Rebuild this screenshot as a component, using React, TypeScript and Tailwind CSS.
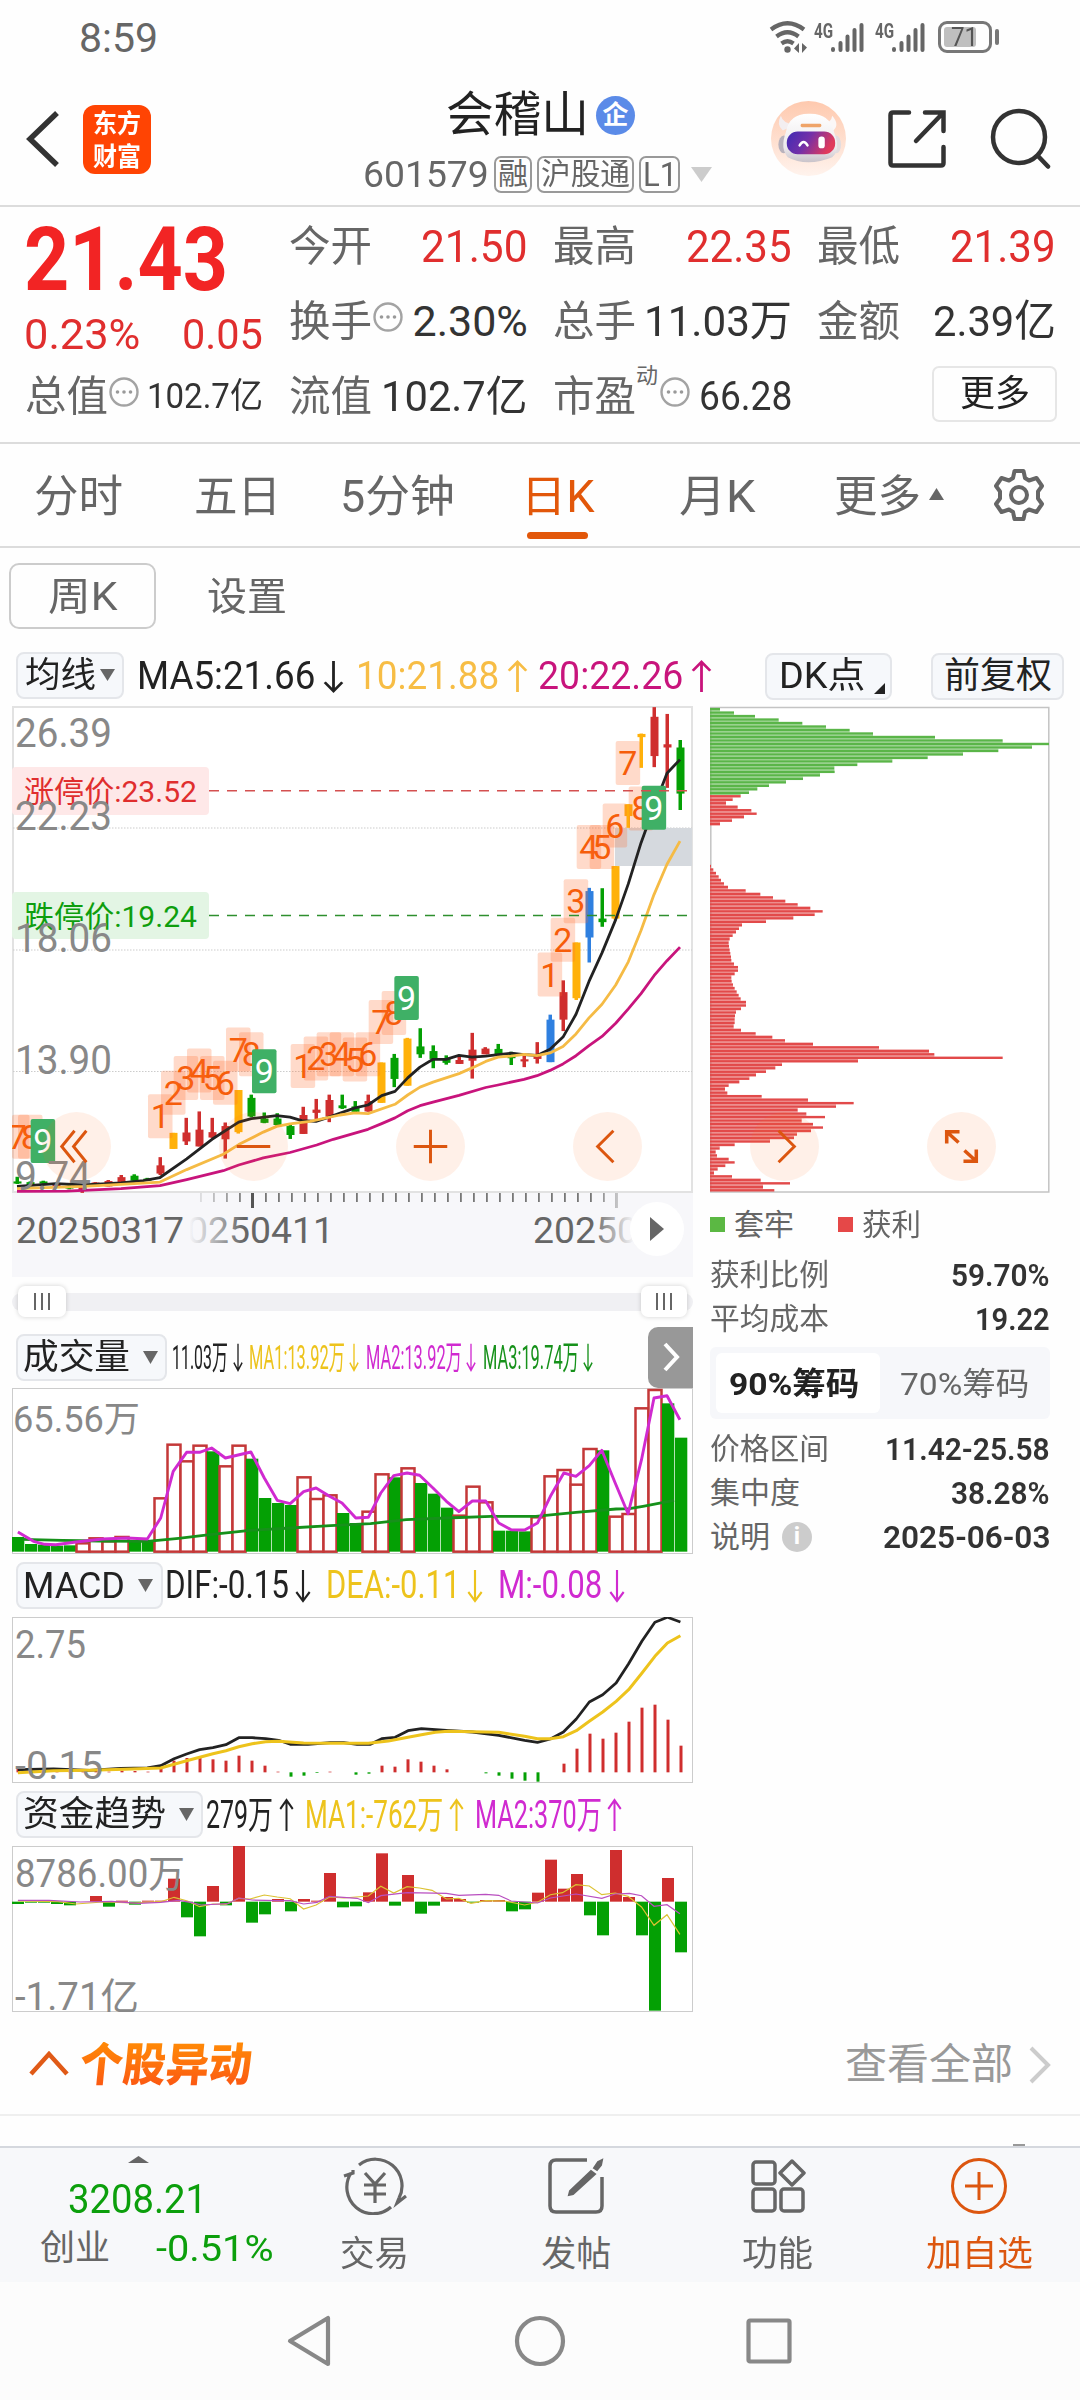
import { useLayoutEffect, useRef, useState } from 'react';
import type { ReactNode } from 'react';

const RED = '#cf2e2e';
const GREEN = '#04a004';
const YELLOW = '#ffb10a';
const BLUE = '#2f80e0';

type Point = [number, number];

// Squeezes or stretches a label to the width of its box
function Fit({ className = '', children }: { className?: string; children: ReactNode }) {
  const outer = useRef<HTMLSpanElement>(null);
  const inner = useRef<HTMLSpanElement>(null);
  const [scale, setScale] = useState(1);

  useLayoutEffect(() => {
    if (outer.current && inner.current) {
      setScale(outer.current.clientWidth / inner.current.offsetWidth);
    }
  }, []);

  return (
    <span ref={outer} className={`inline-block shrink-0 whitespace-nowrap leading-none ${className}`}>
      <span ref={inner} className="inline-block origin-left" style={{ transform: `scaleX(${scale})` }}>
        {children}
      </span>
    </span>
  );
}

function Arrow({ up = false, className = '' }: { up?: boolean; className?: string }) {
  return (
    <svg
      viewBox="0 0 18 34"
      fill="none"
      stroke="currentColor"
      strokeWidth="2.4"
      preserveAspectRatio="none"
      className={`shrink-0 ${up ? 'rotate-180' : ''} ${className}`}
    >
      <path d="M9 1V32M1.5 23L9 32L16.5 23" />
    </svg>
  );
}

function Triangle({ className = '' }: { className?: string }) {
  return (
    <svg viewBox="0 0 10 10" preserveAspectRatio="none" fill="currentColor" className={`shrink-0 ${className}`}>
      <path d="M0 0H10L5 10Z" />
    </svg>
  );
}

function Dots() {
  return (
    <svg viewBox="0 0 30 30" className="w-[30px] h-[30px] shrink-0 mb-[10px]" fill="none" stroke="#a3a3a3" strokeWidth="2.4">
      <circle cx="15" cy="15" r="13.5" />
      <g fill="#999" stroke="none">
        <circle cx="8.5" cy="15" r="1.8" />
        <circle cx="15" cy="15" r="1.8" />
        <circle cx="21.5" cy="15" r="1.8" />
      </g>
    </svg>
  );
}

function Signal() {
  return (
    <div className="flex items-start">
      <Fit className="w-[19px] text-[20px] font-bold">4G</Fit>
      <svg viewBox="0 0 36 32" className="w-[36px] h-[32px] -ml-[3px]" stroke="#666" strokeWidth="4" strokeLinecap="round">
        <path d="M3 28V29M10.5 22V29M17.500 15.500V29M24.500 9V29M31.500 4V29" />
      </svg>
    </div>
  );
}

function StatusBar() {
  return (
    <div className="h-[72px] flex items-center pl-[79px] pr-[81px] pb-1 text-[#666]">
      <Fit className="w-[79px] text-[41px] mt-[8px]">8:59</Fit>
      <div className="ml-auto flex items-center mt-[5px]">
        <svg viewBox="0 0 40 34" className="w-[40px] h-[34px]" fill="none" stroke="#666" strokeWidth="4.200">
          <path d="M2 9.500Q18.500 -3 35 9.500M7.500 16.500Q18.500 8 29.500 16.500M12.500 23.500Q18.500 19 24.500 23.500" />
          <circle cx="18.500" cy="29.500" r="3.200" fill="#666" stroke="none" />
          <path d="M30 23V33L25 28.500ZM33 33V23L38 27.500Z" fill="#666" stroke="none" />
        </svg>
        <div className="ml-[5px]"><Signal /></div>
        <div className="ml-[9px]"><Signal /></div>
        <div className="ml-[11px] w-[54px] h-[32px] border-[3px] border-[#777] rounded-[9px] p-[3px] flex relative">
          <div className="w-[32px] h-full bg-[#bfbfbf] rounded-[3px]" />
          <Fit className="absolute left-[10px] top-0 w-[27px] text-[26px] text-[#555]">71</Fit>
        </div>
        <div className="w-[4px] h-[16px] ml-[3px] bg-[#777] rounded-full" />
      </div>
    </div>
  );
}

function Robot() {
  return (
    <svg viewBox="0 0 76 76" className="w-[75px] h-[75px]">
      <defs>
        <linearGradient id="halo" x1="0" y1="0" x2="0" y2="1">
          <stop offset="0" stopColor="#fec9ae" />
          <stop offset="1" stopColor="#fff3ed" />
        </linearGradient>
        <linearGradient id="visor" x1="0" y1="0" x2="1" y2="0.3">
          <stop offset="0" stopColor="#3f2bb4" />
          <stop offset="0.5" stopColor="#7430a8" />
          <stop offset="1" stopColor="#e03a5c" />
        </linearGradient>
        <linearGradient id="shell" x1="0" y1="0" x2="0" y2="1">
          <stop offset="0" stopColor="#ffffff" />
          <stop offset="0.7" stopColor="#ece9ec" />
          <stop offset="1" stopColor="#c9c3ca" />
        </linearGradient>
      </defs>
      <circle cx="38" cy="38" r="38" fill="url(#halo)" />
      <path d="M10 15Q5 24 12 30L24 24Q12 23 10 15Z" fill="#f3eef0" />
      <path d="M62 15Q70 24 63 30L52 22Q61 23 62 15Z" fill="#fbf7f7" />
      <ellipse cx="13" cy="44" rx="5.500" ry="9" fill="#b9b2bc" />
      <ellipse cx="66" cy="44" rx="5" ry="9" fill="#e2dcdf" />
      <path d="M15 32Q18 13 38 13Q60 12 64 32Q71 50 62 57Q50 62 38 62Q26 62 17 57Q9 48 15 32Z" fill="url(#shell)" />
      <rect x="30" y="23" width="21" height="3.500" rx="1.500" fill="#efa469" />
      <rect x="16" y="31" width="49" height="23" rx="11" fill="url(#visor)" />
      <path d="M29 45Q33 38 37 45" fill="none" stroke="#fff" strokeWidth="2.500" strokeLinecap="round" />
      <rect x="48" y="36" width="6.500" height="12" rx="3" fill="#fff" />
    </svg>
  );
}

function Header() {
  return (
    <header className="h-[135px] flex border-b-2 border-[#dcdcdc] relative">
      <svg viewBox="0 0 34 56" className="w-[34px] h-[56px] ml-[26px] mt-[39px]" fill="none" stroke="#333" strokeWidth="5.500">
        <path d="M31 2L4 28L31 54" />
      </svg>
      <div className="w-[68px] h-[69px] ml-[22.500px] mt-[33px] rounded-[12px] bg-[#ff4403] text-white font-bold text-[26px] leading-[30px] text-center pt-[4px]">
        <Fit className="w-[48px]">东方</Fit>
        <Fit className="w-[48px] mt-[5px]">财富</Fit>
      </div>

      <div className="absolute left-[363px] top-[16px]">
        <div className="flex items-center h-[54px] pl-[83px]">
          <Fit className="w-[143px] text-[48px] text-[#222]">会稽山</Fit>
          <span className="ml-[7px] w-[39px] h-[39px] rounded-full bg-[#5b8be8] text-white font-bold text-[26px] leading-[38px] text-center">企</span>
        </div>
        <div className="flex items-center h-[38px] mt-[13px] text-[#666]">
          <Fit className="w-[126px] text-[37px]">601579</Fit>
          <span className="ml-[5px] w-[38px] h-[37px] border-2 border-[#999] rounded-[7px] flex items-center justify-center">
            <Fit className="w-[30px] text-[30px]">融</Fit>
          </span>
          <span className="ml-[5px] w-[97px] h-[37px] border-2 border-[#999] rounded-[7px] flex items-center justify-center">
            <Fit className="w-[89px] text-[30px]">沪股通</Fit>
          </span>
          <span className="ml-[5px] w-[41px] h-[37px] border-2 border-[#999] rounded-[7px] flex items-center justify-center">
            <Fit className="w-[34px] text-[33px]">L1</Fit>
          </span>
          <Triangle className="w-[21px] h-[15px] ml-[11px] text-[#ccc]" />
        </div>
      </div>

      <div className="ml-auto flex items-center pr-[29px] pb-[1px]">
        <Robot />
        <svg viewBox="0 0 60 60" className="w-[60px] h-[60px] ml-[41px] mt-[2px]" fill="none" stroke="#333" strokeWidth="4.500" strokeLinecap="round">
          <path d="M22 3.500H6Q3.500 3.500 3.500 6V54Q3.500 56.500 6 56.500H54Q56.500 56.500 56.500 54V38" />
          <path d="M38 3.500H56.500V22M55 5L29 32" />
        </svg>
        <svg viewBox="0 0 62 62" className="w-[62px] h-[62px] ml-[42px] mt-[1px]" fill="none" stroke="#333" strokeWidth="4.500" strokeLinecap="round">
          <circle cx="30" cy="29" r="26" />
          <path d="M49 48L59 58.500" />
        </svg>
      </div>
    </header>
  );
}

function Quote() {
  const label = 'w-[83px] -ml-[1.5px] text-[42px] text-[#666]';
  return (
    <section className="h-[237px] border-b-2 border-[#dcdcdc] pt-[2px] pl-[26px] pr-[24px] grid grid-cols-4 gap-x-[27px]">
      <div>
        <div className="h-[100px] flex items-center">
          <Fit className="w-[204px] -ml-[2px] text-[89px] font-bold text-[#f22424]">21.43</Fit>
        </div>
        <div className="h-[50px] flex items-center justify-between text-[43px] text-[#e02e2e]">
          <Fit className="w-[116px] -ml-[2px]">0.23%</Fit>
          <Fit className="w-[81px]">0.05</Fit>
        </div>
        <div className="h-[75px] flex items-center">
          <Fit className={label}>总值</Fit>
          <span className="ml-[1px]"><Dots /></span>
          <Fit className="w-[116px] ml-auto text-[35px] text-[#333]">102.7亿</Fit>
        </div>
      </div>

      <div>
        <div className="h-[75px] flex items-center justify-between">
          <Fit className={label}>今开</Fit>
          <Fit className="w-[107px] text-[44px] text-[#e02e2e]">21.50</Fit>
        </div>
        <div className="h-[75px] flex items-center">
          <Fit className={label}>换手</Fit>
          <span className="ml-[1px]"><Dots /></span>
          <Fit className="w-[115px] ml-auto text-[43px] text-[#333]">2.30%</Fit>
        </div>
        <div className="h-[75px] flex items-center justify-between">
          <Fit className={label}>流值</Fit>
          <Fit className="w-[147px] text-[42px] text-[#333]">102.7亿</Fit>
        </div>
      </div>

      <div>
        <div className="h-[75px] flex items-center justify-between">
          <Fit className={label}>最高</Fit>
          <Fit className="w-[106px] text-[44px] text-[#e02e2e]">22.35</Fit>
        </div>
        <div className="h-[75px] flex items-center justify-between">
          <Fit className={label}>总手</Fit>
          <Fit className="w-[148px] text-[43px] text-[#333]">11.03万</Fit>
        </div>
        <div className="h-[75px] flex items-center">
          <Fit className={label}>市盈</Fit>
          <Fit className="w-[22px] mb-[42px] text-[22px] text-[#666]">动</Fit>
          <span className="ml-[2px]"><Dots /></span>
          <Fit className="w-[93px] ml-auto text-[40px] text-[#333]">66.28</Fit>
        </div>
      </div>

      <div>
        <div className="h-[75px] flex items-center justify-between">
          <Fit className={label}>最低</Fit>
          <Fit className="w-[106px] text-[44px] text-[#e02e2e]">21.39</Fit>
        </div>
        <div className="h-[75px] flex items-center justify-between">
          <Fit className={label}>金额</Fit>
          <Fit className="w-[123px] text-[43px] text-[#333]">2.39亿</Fit>
        </div>
        <div className="h-[71px] flex items-center justify-end">
          <button className="w-[125px] h-[56px] -mr-[1px] mb-[2px] border-2 border-[#e6e6e6] rounded-[7px] flex items-center justify-center">
            <Fit className="w-[70px] text-[36px] text-[#222]">更多</Fit>
          </button>
        </div>
      </div>
    </section>
  );
}

function Tabs() {
  return (
    <nav className="h-[104px] border-b-2 border-[#dcdcdc] flex items-center pt-[3px] pl-[34px] text-[44px] text-[#666] relative">
      <Fit className="w-[89px]">分时</Fit>
      <Fit className="w-[87px] ml-[71px]">五日</Fit>
      <Fit className="w-[115px] ml-[59px]">5分钟</Fit>
      <Fit className="w-[74px] ml-[66px] text-[#e2570a]">日K</Fit>
      <Fit className="w-[77px] ml-[84px]">月K</Fit>
      <Fit className="w-[87px] ml-[78px]">更多</Fit>
      <Triangle className="w-[15px] h-[12px] ml-[8px] mb-[5px] rotate-180" />
      <svg viewBox="0 0 54 54" className="w-[54px] h-[54px] ml-[48px] mb-[4px]" fill="none" stroke="#666" strokeWidth="4" strokeLinejoin="round">
        <path d="M22.500 3H31.500L33 10L37 12.500L44.500 10L50 18L46 23.500V30.500L50 36L44.500 44L37 41.500L33 44L31.500 51H22.500L21 44L17 41.500L9.500 44L4 36L8 30.500V23.500L4 18L9.500 10L17 12.500L21 10Z" />
        <circle cx="27" cy="27" r="8" />
      </svg>
      <div className="absolute left-[527px] bottom-[7px] w-[61px] h-[7px] rounded-full bg-[#e2570a]" />
    </nav>
  );
}

function SubTabs() {
  return (
    <div className="h-[98px] pt-[15px] pl-[9px] flex text-[39px] text-[#666]">
      <div className="w-[147px] h-[66px] border-2 border-[#ccc] rounded-[10px] flex items-center justify-center pt-[3px]">
        <Fit className="w-[69px]">周K</Fit>
      </div>
      <div className="h-[66px] ml-[51px] flex items-center pt-[3px]">
        <Fit className="w-[80px]">设置</Fit>
      </div>
    </div>
  );
}

const chip = 'h-[47px] shrink-0 rounded-[8px] border-2 border-[#e4e6ea] bg-[#f6f8fb] flex items-center text-[#222]';

function AverageRow() {
  return (
    <div className="h-[60px] flex items-center pl-[16px] pr-[16px]">
      <div className={`${chip} w-[108px] pl-[7px] -mt-[2px]`}>
        <Fit className="w-[71px] text-[35px]">均线</Fit>
        <Triangle className="w-[15px] h-[12px] ml-[4px] text-[#666]" />
      </div>
      <div className="flex items-center ml-[13px] text-[38px] text-[#222]">
        <Fit className="w-[178px]">MA5:21.66</Fit>
        <Arrow className="w-[21px] h-[33px] ml-[8px]" />
      </div>
      <div className="flex items-center ml-[12px] text-[38px] text-[#f7bd45]">
        <Fit className="w-[143px]">10:21.88</Fit>
        <Arrow up className="w-[21px] h-[33px] ml-[8px]" />
      </div>
      <div className="flex items-center ml-[10px] text-[38px] text-[#c8147c]">
        <Fit className="w-[145px]">20:22.26</Fit>
        <Arrow up className="w-[21px] h-[33px] ml-[8px]" />
      </div>
      <div className={`${chip} w-[127px] ml-auto pl-[12px] relative`}>
        <Fit className="w-[86px] text-[36px]">DK点</Fit>
        <svg viewBox="0 0 11 11" className="absolute right-[5px] bottom-[4px] w-[11px] h-[11px]">
          <path d="M11 0V11H0Z" fill="#222" />
        </svg>
      </div>
      <div className={`${chip} w-[133px] ml-[39px] pl-[11px]`}>
        <Fit className="w-[108px] text-[36px]">前复权</Fit>
      </div>
    </div>
  );
}

// One column every 13px, shared by all the panels
const cx = (i: number) => 5 + 13 * i;

// [color, high, low, body top, body bottom]
const candles: [string, number, number, number, number][] = [
  [GREEN, 1335, 1355, 1348, 1354], [GREEN, 1348, 1360, 1350, 1358], [GREEN, 1346, 1354, 1348, 1354],
  [RED, 1354, 1362, 1356, 1362], [GREEN, 1358, 1370, 1360, 1368], [RED, 1358, 1380, 1360, 1372],
  [RED, 1350, 1362, 1351, 1362], [RED, 1344, 1362, 1347, 1362], [RED, 1330, 1354, 1336, 1352],
  [GREEN, 1328, 1350, 1332, 1346], [GREEN, 1338, 1346, 1340, 1346], [RED, 1280, 1330, 1303, 1326],
  [YELLOW, 1212, 1257, 1212, 1257], [RED, 1170, 1246, 1211, 1236], [RED, 1152, 1250, 1203, 1250],
  [RED, 1170, 1226, 1210, 1225], [RED, 1183, 1284, 1193, 1230], [YELLOW, 1092, 1214, 1092, 1210],
  [GREEN, 1105, 1168, 1114, 1166], [GREEN, 1155, 1185, 1172, 1184], [GREEN, 1157, 1194, 1172, 1190],
  [GREEN, 1190, 1229, 1193, 1218], [RED, 1139, 1215, 1162, 1215], [RED, 1117, 1173, 1147, 1156],
  [RED, 1105, 1182, 1120, 1165], [GREEN, 1105, 1145, 1135, 1143], [GREEN, 1123, 1155, 1138, 1153],
  [RED, 1105, 1153, 1123, 1152], [YELLOW, 1015, 1128, 1015, 1128], [GREEN, 991, 1084, 1002, 1061],
  [YELLOW, 946, 1080, 948, 1080], [GREEN, 919, 1002, 970, 992], [GREEN, 967, 1031, 983, 1005],
  [GREEN, 995, 1021, 1004, 1016], [RED, 998, 1019, 1008, 1019], [RED, 932, 1060, 979, 1010],
  [RED, 972, 992, 976, 992], [GREEN, 963, 995, 977, 995], [GREEN, 985, 1022, 988, 1003],
  [RED, 990, 1028, 1006, 1012], [RED, 958, 1018, 996, 1005], [BLUE, 881, 1014, 895, 1014],
  [RED, 785, 927, 818, 895], [YELLOW, 679, 840, 679, 835], [BLUE, 526, 735, 535, 665],
  [GREEN, 527, 635, 612, 622], [YELLOW, 465, 615, 465, 612], [YELLOW, 292, 358, 292, 325],
  [YELLOW, 94, 190, 95, 104], [RED, 20, 188, 47, 157], [RED, 39, 246, 124, 133], [GREEN, 112, 308, 133, 262],
];

const ma5: Point[] = [
  [51, 1362], [168, 1354], [250, 1358], [363, 1352], [430, 1346], [480, 1337], [560, 1285], [636, 1230], [716, 1182],
  [754, 1172], [830, 1164], [870, 1168], [905, 1178], [948, 1180], [987, 1168], [1065, 1142], [1104, 1134], [1145, 1108],
  [1185, 1096], [1223, 1058], [1260, 1028], [1299, 1006], [1338, 1006], [1377, 995], [1416, 1000], [1457, 997],
  [1494, 993], [1533, 989], [1572, 993], [1611, 995], [1650, 978], [1689, 944], [1728, 880], [1767, 788], [1806, 708],
  [1847, 615], [1885, 515], [1923, 400], [1962, 300], [2001, 205], [2040, 167],
];
const ma10: Point[] = [
  [51, 1368], [250, 1362], [363, 1356], [480, 1350], [560, 1315], [670, 1272], [716, 1245], [790, 1210], [830, 1194],
  [870, 1187], [930, 1180], [1020, 1162], [1065, 1156], [1104, 1158], [1185, 1132], [1223, 1106], [1260, 1084],
  [1299, 1070], [1377, 1046], [1416, 1030], [1457, 1012], [1494, 1000], [1533, 997], [1572, 992], [1611, 996],
  [1650, 988], [1689, 970], [1728, 935], [1767, 890], [1806, 852], [1847, 798], [1885, 733], [1923, 645], [1962, 545],
  [2001, 460], [2040, 395],
];
const ma20: Point[] = [
  [51, 1376], [200, 1375], [363, 1368], [480, 1360], [560, 1343], [670, 1318], [716, 1302], [790, 1282], [870, 1267],
  [950, 1246], [1000, 1230], [1104, 1202], [1145, 1186], [1185, 1170], [1223, 1150], [1260, 1136], [1299, 1126],
  [1377, 1107], [1457, 1085], [1494, 1078], [1572, 1062], [1611, 1052], [1650, 1037], [1689, 1019], [1728, 996],
  [1767, 968], [1806, 942], [1847, 905], [1885, 865], [1923, 822], [1962, 772], [2001, 730], [2040, 692],
];

// TD sequence marks
const marks: [number, number, number][] = [
  [15, 1161, 7], [54, 1161, 8], [92, 1173, 9],
  [444, 1104, 1], [483, 1038, 2], [521, 997, 3], [561, 976, 4], [600, 997, 5], [639, 1010, 6], [678, 917, 7], [717, 930, 8], [756, 978, 9],
  [872, 963, 1], [911, 942, 2], [950, 930, 3], [989, 930, 4], [1028, 945, 5], [1067, 930, 6], [1106, 840, 7], [1145, 815, 8], [1183, 773, 9],
  [1613, 707, 1], [1652, 610, 2], [1691, 502, 3], [1730, 350, 4], [1769, 350, 5], [1808, 290, 6], [1847, 115, 7], [1886, 242, 8],
];
const lastMark: [number, number, number] = [1925, 240, 9];

const kx = (v: number) => v / 3 - 12;
const ky = (v: number) => v / 2.8 - 6;
const trace = (points: Point[], fx: (v: number) => number, fy: (v: number) => number) =>
  points.map(([x, y]) => `${fx(x).toFixed(1)},${fy(y).toFixed(1)}`).join(' ');

function Mark({ mark: [x, y, n] }: { mark: [number, number, number] }) {
  const done = n === 9;
  const left = Math.max(kx(x), 0);
  return (
    <g fontSize="34" textAnchor="middle">
      <rect x={left} y={ky(y)} width={kx(x) + 24.5 - left} height="44" rx="2" fill={done ? '#3fb066' : '#ff6a2b'} fillOpacity={done ? 1 : 0.25} />
      <text x={kx(x) + 12.2} y={ky(y) + 34} fill={done ? '#fff' : '#f65d0a'}>{n}</text>
    </g>
  );
}

function CandleChart() {
  return (
    <svg viewBox="0 0 681 487" className="block w-[681px] h-[487px]">
      <rect x="1" y="1" width="679" height="485" fill="#fff" stroke="#e2e2e2" strokeWidth="2" />
      <g stroke="#ccc" strokeWidth="1.2" strokeDasharray="1.5 1.5">
        <path d="M1 122H680M1 244H680M1 365.500H680" />
      </g>
      <rect x="603" y="122" width="77" height="38" fill="#d5d9de" />

      <rect x="0" y="61" width="197" height="48" rx="4" fill="#fee8e8" />
      <rect x="0" y="186" width="197" height="47" rx="4" fill="#e3f5e4" />
      <g fontSize="30">
        <text x="12" y="95.500" fill="#e02e2e" textLength="173" lengthAdjust="spacingAndGlyphs">涨停价:23.52</text>
        <text x="12" y="220.500" fill="#0e9e0e" textLength="173" lengthAdjust="spacingAndGlyphs">跌停价:19.24</text>
      </g>

      {candles.map(([color, high, low, top, bottom], i) => (
        <g key={i} fill={color}>
          <rect x={cx(i) - 1.5} y={ky(high)} width="3.500" height={(low - high) / 2.8} />
          <rect x={cx(i) - 3.5} y={ky(top)} width="8" height={(bottom - top) / 2.8} />
        </g>
      ))}

      {marks.map((mark, i) => <Mark key={i} mark={mark} />)}

      <g fill="none" strokeWidth="2.800" strokeLinejoin="round">
        <polyline points={trace(ma20, kx, ky)} stroke="#c8147c" />
        <polyline points={trace(ma5, kx, ky)} stroke="#222" />
        <polyline points={trace(ma10, kx, ky)} stroke="#f5bb45" />
      </g>

      <g fontSize="40.500" fill="#888">
        <text x="3" y="40.500" textLength="97" lengthAdjust="spacingAndGlyphs">26.39</text>
        <text x="3" y="124" textLength="97" lengthAdjust="spacingAndGlyphs">22.23</text>
        <text x="3" y="246" textLength="97" lengthAdjust="spacingAndGlyphs">18.06</text>
        <text x="3" y="367.500" textLength="97" lengthAdjust="spacingAndGlyphs">13.90</text>
        <text x="3" y="484" textLength="76" lengthAdjust="spacingAndGlyphs">9.74</text>
      </g>

      {/* sits over the averages */}
      <Mark mark={lastMark} />

      <path d="M197 84.700H675" stroke="#d45050" strokeWidth="1.500" strokeDasharray="10 8" />
      <path d="M197 209.400H675" stroke="#2e8f2e" strokeWidth="1.500" strokeDasharray="10 8" />
    </svg>
  );
}

function TimeAxis() {
  const ticks = Array.from({ length: 33 }, (_, i) => 175 + 13 * i);
  return (
    <div className="w-[681px] h-[84px] bg-[#f7f7fa]">
      <svg viewBox="0 0 681 84" className="block w-[681px] h-[84px]">
        <defs>
          <linearGradient id="fadeL">
            <stop offset="0" stopColor="#f7f7fa" />
            <stop offset="1" stopColor="#f7f7fa" stopOpacity="0" />
          </linearGradient>
          <linearGradient id="fadeR">
            <stop offset="0" stopColor="#f7f7fa" stopOpacity="0" />
            <stop offset="1" stopColor="#f7f7fa" />
          </linearGradient>
        </defs>
        {ticks.map((x) => (
          <rect key={x} x={x} y="0" width="1.800" height="9" fill="#777" />
        ))}
        <rect x="239" y="0" width="3" height="15" fill="#555" />
        <rect x="603" y="0" width="3" height="15" fill="#777" />
        <g fontSize="37" fill="#666">
          <text x="154" y="49.500" textLength="168" lengthAdjust="spacingAndGlyphs">20250411</text>
          <text x="521" y="49.500" textLength="168" lengthAdjust="spacingAndGlyphs">20250603</text>
          <rect x="0" y="0" width="178" height="84" fill="#f7f7fa" />
          <rect x="177" y="0" width="55" height="84" fill="url(#fadeL)" />
          <rect x="580" y="0" width="42" height="84" fill="url(#fadeR)" />
          <rect x="621" y="0" width="60" height="84" fill="#f7f7fa" />
          <text x="4" y="49.500" textLength="168" lengthAdjust="spacingAndGlyphs">20250317</text>
        </g>
        <circle cx="645" cy="36" r="27" fill="#fff" />
        <path d="M638 24V48L652 36Z" fill="#666" />
      </svg>
    </div>
  );
}

function Handle({ className = '' }: { className?: string }) {
  return (
    <div className={`h-[31px] rounded-[7px] bg-white shadow-[0_0_5px_rgba(0,0,0,0.18)] flex items-center justify-center gap-[5px] ${className}`}>
      <i className="w-[2px] h-[17px] bg-[#666]" />
      <i className="w-[2px] h-[17px] bg-[#666]" />
      <i className="w-[2px] h-[17px] bg-[#666]" />
    </div>
  );
}

function RangeSlider() {
  return (
    <div className="h-[49px] flex items-center">
      <div className="w-[681px] h-[18px] rounded-full bg-[#f0f0f3] flex items-center justify-between pl-[6px] pr-[6px]">
        <Handle className="w-[48px]" />
        <Handle className="w-[46px]" />
      </div>
    </div>
  );
}

// [top, 1 = rise / 0 = fall]
const volumes: [number, number][] = [
  [1072, 0], [1093, 0], [1095, 0], [1098, 0], [1097, 0], [1088, 1], [1073, 1], [1082, 1], [1069, 1], [1083, 0], [1083, 0],
  [953, 1], [792, 1], [842, 1], [795, 1], [815, 0], [857, 1], [795, 1], [837, 0], [955, 0], [970, 0], [976, 0], [890, 1],
  [955, 1], [944, 1], [1000, 0], [1030, 0], [993, 1], [881, 1], [893, 0], [863, 1], [910, 0], [942, 0], [984, 0],
  [1005, 1], [918, 1], [965, 1], [1053, 0], [1053, 0], [1055, 0], [1010, 1], [887, 1], [868, 1], [912, 1], [805, 1],
  [812, 0], [1008, 1], [1000, 1], [683, 1], [628, 1], [671, 0], [774, 0],
];
const volumeMa: Point[] = [
  [40, 1057], [75, 1085], [100, 1094], [125, 1095], [170, 1087], [230, 1078], [285, 1075], [330, 1078], [360, 1015],
  [388, 875], [418, 818], [447, 818], [474, 805], [505, 835], [562, 817], [592, 895], [621, 962], [650, 972], [680, 936],
  [708, 925], [738, 950], [766, 970], [797, 1015], [825, 1013], [853, 940], [882, 888], [912, 880], [940, 887],
  [970, 925], [1000, 965], [1028, 996], [1058, 964], [1088, 964], [1117, 1030], [1145, 1050], [1175, 1051],
  [1204, 1030], [1233, 950], [1263, 880], [1290, 890], [1320, 858], [1348, 812], [1378, 910], [1407, 1002],
  [1437, 840], [1465, 655], [1494, 648], [1523, 720],
];
const volumeLongMa: Point[] = [
  [50, 1079], [140, 1082], [220, 1084], [330, 1085], [400, 1076], [470, 1065], [560, 1052], [650, 1045], [740, 1038],
  [830, 1032], [910, 1020], [1000, 1015], [1100, 1010], [1200, 1010], [1290, 998], [1380, 988], [1410, 987],
  [1440, 980], [1510, 962],
];

const sx = (v: number) => v / 2.24 - 12;

function VolumeChart() {
  const vy = (v: number) => (v - 625) / 3;
  return (
    <svg viewBox="0 0 681 166" className="block w-[681px] h-[166px]">
      <rect x="0.500" y="0.500" width="680" height="165" fill="#fff" stroke="#ccc" />
      {volumes.map(([top, rise], i) =>
        rise ? (
          <rect key={i} x={cx(i) - 5.5} y={vy(top) + 1} width="13" height={vy(1116) - vy(top) - 1} fill="#fff" stroke="#c43838" strokeWidth="2.500" />
        ) : (
          <rect key={i} x={cx(i) - 5} y={vy(top)} width="12.300" height={vy(1116) - vy(top)} fill={GREEN} />
        ),
      )}
      <text x="1" y="44" fontSize="36" fill="#888" textLength="127" lengthAdjust="spacingAndGlyphs">65.56万</text>
      <polyline points={trace(volumeLongMa, sx, vy)} fill="none" stroke="#16911a" strokeWidth="2.800" />
      <polyline points={trace(volumeMa, sx, vy)} fill="none" stroke="#d02ad0" strokeWidth="2.900" strokeLinejoin="round" />
    </svg>
  );
}

const macdBars = [
  687, 689, 690, 694, 690, 691, 693, 696, 693, 694, 696, 687, 663, 655, 652, 659, 663, 648, 663, 678, 696, 711, 708, 700,
  696, 698, 705, 702, 678, 681, 659, 666, 678, 689, 698, 698, 701, 708, 717, 723, 726, 698, 672, 627, 582, 597, 579, 546,
  504, 495, 540, 618,
];
const dif: Point[] = [
  [40, 690], [120, 688], [200, 692], [270, 686], [330, 685], [360, 678], [390, 657], [418, 643], [447, 630], [477, 624],
  [506, 615], [535, 594], [565, 594], [595, 597], [624, 602], [650, 614], [690, 614], [740, 609], [770, 609], [800, 614],
  [830, 614], [855, 597], [885, 593], [914, 573], [944, 567], [1000, 572], [1058, 577], [1117, 587], [1175, 602],
  [1204, 608], [1233, 598], [1262, 577], [1291, 538], [1320, 487], [1350, 465], [1380, 430], [1408, 372], [1438, 304],
  [1467, 248], [1495, 233], [1524, 247],
];
const dea: Point[] = [
  [40, 699], [120, 693], [200, 692], [280, 689], [360, 685], [418, 663], [477, 642], [506, 633], [535, 621], [565, 612],
  [595, 606], [624, 605], [680, 610], [740, 611], [825, 611], [870, 604], [914, 593], [944, 585], [975, 578],
  [1004, 575], [1088, 577], [1117, 578], [1175, 590], [1204, 597], [1233, 597], [1262, 591], [1291, 573], [1320, 545],
  [1350, 517], [1380, 485], [1408, 450], [1438, 400], [1467, 350], [1495, 310], [1524, 288],
];

function MacdChart() {
  const my = (v: number) => (v - 232) / 3;
  return (
    <svg viewBox="0 0 681 166" className="block w-[681px] h-[166px]">
      <rect x="0.500" y="0.500" width="680" height="165" fill="#fff" stroke="#ccc" />
      {macdBars.map((v, i) => (
        <rect key={i} x={cx(i) - 0.5} y={my(Math.min(v, 698))} width="3" height={Math.abs(v - 698) / 3} fill={v > 698 ? GREEN : RED} />
      ))}
      <polyline points={trace(dif, sx, my)} fill="none" stroke="#222" strokeWidth="2.800" strokeLinejoin="round" />
      <polyline points={trace(dea, sx, my)} fill="none" stroke="#edc31c" strokeWidth="3" strokeLinejoin="round" />
      <g fontSize="38" fill="#888">
        <text x="3" y="40.500" textLength="71" lengthAdjust="spacingAndGlyphs">2.75</text>
        <text x="3" y="161.500" textLength="88" lengthAdjust="spacingAndGlyphs">-0.15</text>
      </g>
    </svg>
  );
}

const fundBars = [
  373, 369, 369, 373, 377, 366, 349, 381, 363, 375, 363, 363, 297, 413, 470, 319, 377, 199, 429, 404, 358, 395, 358, 363,
  280, 383, 380, 338, 221, 378, 286, 402, 378, 352, 358, 369, 361, 361, 395, 389, 339, 240, 327, 283, 407, 467, 211, 352,
  467, 693, 295, 518,
];
const fundMa1: Point[] = [
  [40, 364], [130, 366], [170, 373], [230, 367], [300, 370], [360, 366], [390, 353], [420, 364], [447, 381], [477, 373],
  [506, 374], [535, 356], [560, 358], [592, 346], [621, 352], [650, 357], [680, 388], [708, 376], [738, 352], [770, 355],
  [825, 349], [853, 320], [882, 340], [912, 321], [940, 325], [968, 332], [1000, 358], [1028, 356], [1055, 371],
  [1088, 363], [1130, 364], [1175, 376], [1204, 368], [1233, 345], [1260, 339], [1290, 315], [1320, 319], [1348, 345],
  [1378, 340], [1407, 350], [1437, 382], [1465, 437], [1494, 405], [1523, 464],
];
const fundMa2: Point[] = [
  [40, 362], [110, 362], [180, 367], [250, 365], [310, 371], [360, 368], [400, 362], [430, 369], [450, 376], [510, 372],
  [535, 355], [565, 361], [620, 363], [650, 363], [680, 373], [710, 368], [738, 350], [800, 356], [825, 369], [853, 348],
  [912, 339], [1000, 341], [1028, 347], [1088, 344], [1117, 347], [1145, 364], [1204, 370], [1233, 355], [1290, 343],
  [1348, 356], [1378, 343], [1410, 341], [1437, 348], [1465, 380], [1494, 375], [1523, 402],
];

function FundChart() {
  const fy = (v: number) => (v - 199) / 3;
  return (
    <svg viewBox="0 0 681 166" className="block w-[681px] h-[166px]">
      <rect x="0.500" y="0.500" width="680" height="165" fill="#fff" stroke="#ccc" />
      {fundBars.map((v, i) => (
        <rect key={i} x={cx(i) - 5} y={fy(Math.min(v, 366))} width="12" height={Math.abs(v - 366) / 3} fill={v > 366 ? GREEN : RED} />
      ))}
      <g fontSize="38" fill="#888">
        <text x="3" y="41" textLength="170" lengthAdjust="spacingAndGlyphs">8786.00万</text>
        <text x="3" y="164" textLength="124" lengthAdjust="spacingAndGlyphs">-1.71亿</text>
      </g>
      <polyline points={trace(fundMa1, sx, fy)} fill="none" stroke="#dcc233" strokeWidth="1.200" />
      <polyline points={trace(fundMa2, sx, fy)} fill="none" stroke="#b94fc0" strokeWidth="1.200" />
    </svg>
  );
}

const trapped = [
  93, 135, 198, 269, 340, 411, 482, 552, 738, 941, 1080, 1029, 928, 822, 716, 610, 505, 436, 437, 393, 342, 291, 240, 205, 180,
];
const profit = [
  155, 131, 111, 146, 187, 203, 165, 129, 93, 0, 0, 0, 0, 0, 0, 0, 0, 0, 0, 0,
  66, 73, 81, 89, 96, 105, 117, 170, 214, 252, 289, 326, 364, 401, 377, 313, 231, 159, 150, 141, 131, 122, 119, 120, 122,
  124, 126, 127, 135, 147, 147, 137, 127, 128, 132, 137, 143, 149, 155, 171, 171, 156, 141, 138, 137, 137, 134, 156, 200,
  250, 288, 372, 570, 720, 736, 941, 507, 279, 259, 231, 201, 181, 151, 119, 108, 115, 218, 357, 494, 441, 326, 352, 408,
  338, 372, 402, 366, 324, 315, 243, 137, 92, 80, 84, 119, 137, 109, 86, 75, 129, 215, 303, 222, 256,
];

function CostChart() {
  const bars = [...trapped, ...profit];
  return (
    <svg viewBox="0 0 340 487" className="block w-[340px] h-[487px]">
      <rect x="0.800" y="1.500" width="338" height="484.500" fill="#fff" stroke="#c4c4c4" strokeWidth="1.500" />
      {bars.map((v, i) => {
        if (!v) return null;
        const y = 1.9 + i * 3.487;
        const w = (v - 63) / 3;
        const next = Math.max(Math.min(v, bars[i + 1] ?? 0) - 63, 0) / 3;
        return (
          <g key={i} fill={i < trapped.length ? '#5ab548' : '#e24a4a'}>
            <rect x="0" y={y} width={w} height="2.400" />
            <rect x="0" y={y + 2.4} width={next} height="1.100" fillOpacity="0.65" />
          </g>
        );
      })}
    </svg>
  );
}

function StatRow({ children }: { children: ReactNode }) {
  return <div className="h-[44px] flex items-center justify-between text-[#666] text-[30px]">{children}</div>;
}

function CostPanel() {
  return (
    <div className="w-[340px] ml-[17.5px]">
      <CostChart />
      <div className="h-[60px] flex items-center text-[30px] text-[#666] pt-[3px]">
        <i className="w-[15px] h-[15px] bg-[#5bb843]" />
        <Fit className="w-[60px] ml-[9px]">套牢</Fit>
        <i className="w-[15px] h-[15px] ml-[44px] bg-[#e54848]" />
        <Fit className="w-[59px] ml-[9px]">获利</Fit>
      </div>
      <StatRow>
        <Fit className="w-[119px]">获利比例</Fit>
        <Fit className="w-[99px] text-[31px] font-semibold text-[#333]">59.70%</Fit>
      </StatRow>
      <StatRow>
        <Fit className="w-[119px]">平均成本</Fit>
        <Fit className="w-[75px] text-[31px] font-semibold text-[#333]">19.22</Fit>
      </StatRow>
      <div className="h-[72px] mt-[6px] mb-[8px] rounded-[6px] bg-[#f6f7fa] p-[6px] flex text-[32px]">
        <div className="w-[164px] h-full rounded-[6px] bg-white flex items-center pl-[13px] pt-[1px]">
          <Fit className="w-[130px] font-bold text-[#222]">90%筹码</Fit>
        </div>
        <div className="flex items-center pl-[20px] pt-[1px]">
          <Fit className="w-[129px] text-[#666]">70%筹码</Fit>
        </div>
      </div>
      <StatRow>
        <Fit className="w-[119px]">价格区间</Fit>
        <Fit className="w-[165px] text-[31px] font-semibold text-[#333]">11.42-25.58</Fit>
      </StatRow>
      <StatRow>
        <Fit className="w-[90px]">集中度</Fit>
        <Fit className="w-[99px] text-[31px] font-semibold text-[#333]">38.28%</Fit>
      </StatRow>
      <StatRow>
        <div className="flex items-center">
          <Fit className="w-[60px]">说明</Fit>
          <span className="ml-[12px] w-[30px] h-[30px] rounded-full bg-[#ccc] text-white font-bold text-[24px] leading-[29px] text-center">i</span>
        </div>
        <Fit className="w-[167px] text-[31px] font-semibold text-[#333]">2025-06-03</Fit>
      </StatRow>
    </div>
  );
}

function Tools() {
  const icons = [
    'M-2 -16L-15 0L-2 16M10 -16L-3 0L10 16',
    'M-17 0H17',
    'M-17 0H17M0 -17V17',
    'M6 -16L-10 0L6 16',
    'M-6 -16L10 0L-6 16',
    'M-15 -3V-15H-2M-15 -15L-3 -4M15 3V15H2M15 15L3 4',
  ];
  return (
    <div className="absolute left-[42px] top-[406px] flex gap-[108px]">
      {icons.map((d, i) => (
        <svg key={i} viewBox="-35 -35 70 70" className="w-[69px] h-[69px]">
          <circle r="35" fill="#ff6a1f" fillOpacity="0.1" />
          <path d={d} fill="none" stroke="#dc560f" strokeWidth={i === 5 ? 3.6 : 3} />
        </svg>
      ))}
    </div>
  );
}

function VolumeRow() {
  return (
    <div className="h-[62px] flex items-center pl-[4px] w-[681px]">
      <div className={`${chip} w-[151px] pl-[5px]`}>
        <Fit className="w-[107px] text-[35px]">成交量</Fit>
        <Triangle className="w-[15px] h-[13px] ml-[13px] text-[#666]" />
      </div>
      <div className="flex items-center text-[33px] ml-[5px]">
        <Fit className="w-[56px] text-[#222]">11.03万</Fit>
        <Arrow className="w-[10px] h-[29px] ml-[5px] text-[#222]" />
        <Fit className="w-[96px] ml-[6px] text-[#edc31c]">MA1:13.92万</Fit>
        <Arrow className="w-[10px] h-[29px] ml-[4px] text-[#edc31c]" />
        <Fit className="w-[96px] ml-[7px] text-[#d02ad0]">MA2:13.92万</Fit>
        <Arrow className="w-[10px] h-[29px] ml-[4px] text-[#d02ad0]" />
        <Fit className="w-[96px] ml-[7px] text-[#16911a]">MA3:19.74万</Fit>
        <Arrow className="w-[10px] h-[29px] ml-[4px] text-[#16911a]" />
      </div>
      <div className="ml-auto w-[45px] h-[61px] rounded-l-[10px] bg-[#989898] flex items-center justify-center">
        <svg viewBox="0 0 18 30" className="w-[18px] h-[30px] ml-[4px]" fill="none" stroke="#fff" strokeWidth="4">
          <path d="M2 2L14 15L2 28" />
        </svg>
      </div>
    </div>
  );
}

function MacdRow() {
  return (
    <div className="h-[63px] flex items-center pl-[4px] text-[39px]">
      <div className={`${chip} w-[147px] pl-[5px]`}>
        <Fit className="w-[102px] text-[37px]">MACD</Fit>
        <Triangle className="w-[15px] h-[13px] ml-[13px] text-[#666]" />
      </div>
      <Fit className="w-[124px] ml-[2px] text-[#222]">DIF:-0.15</Fit>
      <Arrow className="w-[16px] h-[34px] ml-[6px] text-[#222]" />
      <Fit className="w-[134px] ml-[15px] text-[#edc31c]">DEA:-0.11</Fit>
      <Arrow className="w-[16px] h-[34px] ml-[7px] text-[#edc31c]" />
      <Fit className="w-[104px] ml-[15px] text-[#d02ad0]">M:-0.08</Fit>
      <Arrow className="w-[16px] h-[34px] ml-[7px] text-[#d02ad0]" />
    </div>
  );
}

function FundRow() {
  return (
    <div className="h-[63px] flex items-center pl-[4px] text-[38px]">
      <div className={`${chip} w-[187px] pl-[5px]`}>
        <Fit className="w-[143px] text-[35px]">资金趋势</Fit>
        <Triangle className="w-[15px] h-[13px] ml-[13px] text-[#666]" />
      </div>
      <Fit className="w-[67px] ml-[3px] text-[#222]">279万</Fit>
      <Arrow up className="w-[15px] h-[34px] ml-[6px] text-[#222]" />
      <Fit className="w-[138px] ml-[11px] text-[#edc31c]">MA1:-762万</Fit>
      <Arrow up className="w-[15px] h-[34px] ml-[6px] text-[#edc31c]" />
      <Fit className="w-[127px] ml-[11px] text-[#d02ad0]">MA2:370万</Fit>
      <Arrow up className="w-[15px] h-[34px] ml-[5px] text-[#d02ad0]" />
    </div>
  );
}

function Movement() {
  return (
    <section className="h-[104px] border-b-2 border-[#efefef] flex items-center pl-[29px] pr-[28px] pt-[3px]">
      <svg viewBox="0 0 40 26" className="w-[40px] h-[26px] mb-[3px]" fill="none" stroke="#e05a17" strokeWidth="4.500">
        <path d="M2 24L20 4L38 24" />
      </svg>
      <Fit className="w-[172px] ml-[11px] text-[46px] font-black">
        <span className="inline-block -skew-x-6 bg-gradient-to-b from-[#ff8a05] to-[#fb5512] bg-clip-text text-transparent">个股异动</span>
      </Fit>
      <Fit className="w-[168px] ml-auto text-[42px] text-[#999]">查看全部</Fit>
      <svg viewBox="0 0 24 38" className="w-[24px] h-[38px] ml-[15px]" fill="none" stroke="#ccc" strokeWidth="4">
        <path d="M3 2L20 19L3 36" />
      </svg>
    </section>
  );
}

function BottomBar() {
  const item = 'w-[201.5px] flex flex-col items-center pt-[9px]';
  return (
    <div className="h-[136px] border-t-2 border-[#d5d8de] bg-[#f7f8fa] flex text-[#666]">
      <div className="w-[274px] pl-[40px] pt-[8px]">
        <Triangle className="w-[21px] h-[7px] ml-[88px] rotate-180" />
        <Fit className="w-[139px] ml-[28px] mt-[16px] block text-[41px] text-[#0c9f0c]">3208.21</Fit>
        <div className="flex items-center mt-[10px]">
          <Fit className="w-[70px] text-[35px]">创业</Fit>
          <Fit className="w-[117px] ml-[46px] text-[37px] text-[#0c9f0c]">-0.51%</Fit>
        </div>
      </div>
      <div className={item}>
        <svg viewBox="0 0 66 58" className="w-[66px] h-[58px]" fill="none" stroke="#666" strokeWidth="3.200">
          <path d="M17 8A26.500 26.500 0 0 1 57 41M57 41L55 46L64 39M49 50A26.500 26.500 0 0 1 9 16M11 13V16L2 19" />
          <path d="M23 16L33 27L43 16M22 28H44M22 37H44M33 27V46" />
        </svg>
        <Fit className="w-[69px] mt-[22px] text-[35px]">交易</Fit>
      </div>
      <div className={item}>
        <svg viewBox="0 0 58 58" className="w-[58px] h-[58px]" fill="none" stroke="#666" strokeWidth="3.500">
          <path d="M40 3H9Q3 3 3 9V49Q3 55 9 55H49Q55 55 55 49V20" />
          <path d="M47 11L51 5L55 3L54 8L50 13ZM44 14L48 17L26 37L22 38L23 34Z" fill="#666" strokeWidth="2" />
        </svg>
        <Fit className="w-[70px] mt-[22px] text-[35px]">发帖</Fit>
      </div>
      <div className={item}>
        <svg viewBox="0 0 56 58" className="w-[56px] h-[58px]" fill="none" stroke="#666" strokeWidth="3.500" strokeLinejoin="round">
          <rect x="3" y="5" width="22" height="22" rx="3" />
          <rect x="3" y="32" width="22" height="22" rx="3" />
          <rect x="31" y="32" width="22" height="22" rx="3" />
          <path d="M42 4L54 16L42 28L30 16Z" />
        </svg>
        <Fit className="w-[71px] mt-[22px] text-[35px]">功能</Fit>
      </div>
      <div className={`${item} text-[#dc560f]`}>
        <svg viewBox="0 0 58 58" className="w-[58px] h-[58px]" fill="none" stroke="currentColor" strokeWidth="3">
          <circle cx="29" cy="29" r="26.500" />
          <path d="M15 29H43M29 15V43" />
        </svg>
        <Fit className="w-[107px] mt-[22px] text-[35px]">加自选</Fit>
      </div>
    </div>
  );
}

function SystemNav() {
  return (
    <div className="h-[118px] bg-[#fcfcfc] flex items-center pl-[285px]">
      <svg viewBox="0 0 48 54" className="w-[48px] h-[54px]" fill="none" stroke="#888" strokeWidth="4.200" strokeLinejoin="round">
        <path d="M43 4V50L5 27Z" />
      </svg>
      <svg viewBox="0 0 52 52" className="w-[52px] h-[52px] ml-[181px]" fill="none" stroke="#888" strokeWidth="4.200">
        <circle cx="26" cy="26" r="23" />
      </svg>
      <svg viewBox="0 0 48 48" className="w-[48px] h-[48px] ml-[179px]" fill="none" stroke="#888" strokeWidth="4.200" strokeLinejoin="round">
        <rect x="3.500" y="3.500" width="41" height="41" rx="1.500" />
      </svg>
    </div>
  );
}

export default function App() {
  return (
    <div className="w-[1080px] h-[2400px] overflow-hidden bg-[#fefefe] flex flex-col font-[Roboto,'Noto_Sans_CJK_SC',sans-serif]">
      <StatusBar />
      <Header />
      <Quote />
      <Tabs />
      <SubTabs />
      <AverageRow />
      <div className="flex relative">
        <div className="pl-[11.500px]">
          <CandleChart />
          <TimeAxis />
          <RangeSlider />
          <VolumeRow />
          <VolumeChart />
          <MacdRow />
          <MacdChart />
          <FundRow />
          <FundChart />
        </div>
        <CostPanel />
        <Tools />
      </div>
      <Movement />
      <div className="grow flex justify-end items-end pr-[55px]">
        <i className="w-[12px] h-[2px] bg-[#999]" />
      </div>
      <BottomBar />
      <SystemNav />
    </div>
  );
}
